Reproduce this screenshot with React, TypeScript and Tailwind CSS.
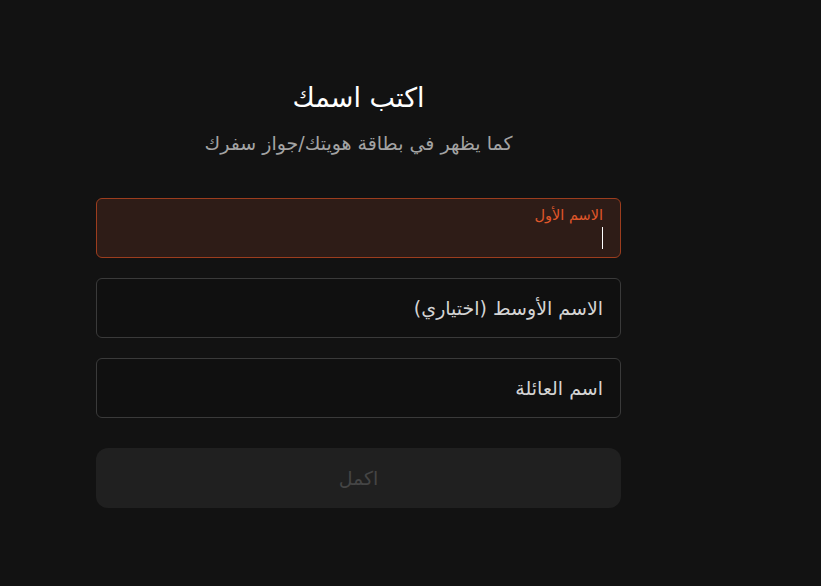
import React from "react";

export default function App() {
  return (
    <div
      className="min-h-[586px] w-full bg-[#121212] text-white"
      style={{ fontFamily: '"DejaVu Sans", sans-serif' }}
    >
      <div className="ml-[96px] w-[525px] pt-[79px]" dir="rtl">
        <h1 className="text-center text-[27px] leading-[38px] font-normal text-white">اكتب اسمك</h1>
        <p className="mt-[12px] text-center text-[19px] leading-[28px] text-[#a3a3a3]">
          كما يظهر في بطاقة هويتك/جواز سفرك
        </p>
        <div className="mt-[41px] flex flex-col gap-[20px]">
          <div className="relative h-[60px] rounded-[6px] border border-[#9c3d1e] bg-[#2e1c17] px-[17px]">
            <div className="pt-[6px] text-[14.5px] leading-[20px] text-[#e0572a]">الاسم الأول</div>
            <div className="mt-[2px] h-[22px] w-[1px] bg-white"></div>
          </div>
          <div className="flex h-[60px] items-center rounded-[6px] border border-[#3a3a3a] bg-[#101010] px-[17px] text-[19px] text-[#d4d4d4]">
            الاسم الأوسط (اختياري)
          </div>
          <div className="flex h-[60px] items-center rounded-[6px] border border-[#3a3a3a] bg-[#101010] px-[17px] text-[19px] text-[#d4d4d4]">
            اسم العائلة
          </div>
        </div>
        <button className="mt-[30px] flex h-[60px] w-full items-center justify-center rounded-[12px] bg-[#202020] text-[19px] text-[#454545]">
          اكمل
        </button>
      </div>
    </div>
  );
}
